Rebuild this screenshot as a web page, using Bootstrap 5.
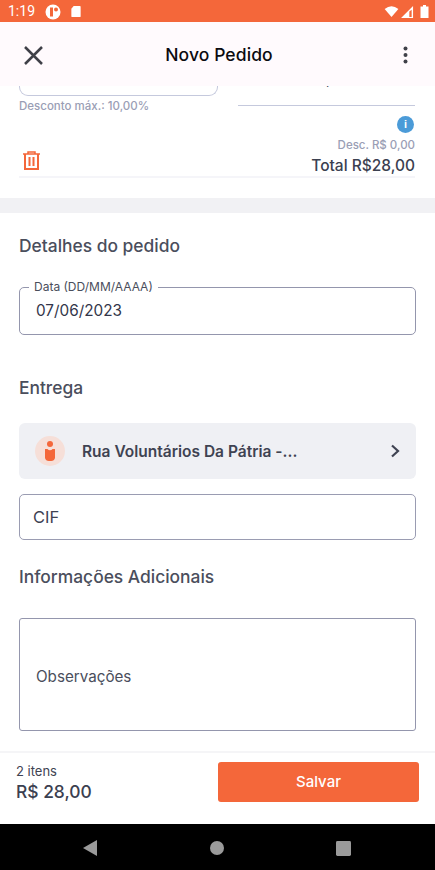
<!DOCTYPE html>
<html lang="pt-BR">
<head>
<meta charset="utf-8">
<title>Novo Pedido</title>
<link href="https://cdn.jsdelivr.net/npm/bootstrap@5.3.0/dist/css/bootstrap.min.css" rel="stylesheet">
<style>
html,body{height:870px;overflow:hidden;background:#fff;}
body{font-family:Inter,"Noto Sans",sans-serif;color:#3b4050;}
.screen{width:435px;height:870px;}
.status-strip{height:22px;background:#f4673a;color:#fff;padding:1px 6px 0 8px;font-family:Roboto,sans-serif;font-size:14px;}
.app-head{height:64px;background:#fffafd;padding:2px 27px 0 23px;flex:none;z-index:2;}
.app-title{font-size:17.5px;font-weight:500;color:#0b0b10;letter-spacing:.1px;margin-right:9px;}
.scroll-zone{height:665px;overflow:hidden;flex:none;}
.clip-row{height:20px;padding:0 20px 0 19px;gap:20px;}
.stub-left{width:199px;height:10px;border:1px solid #c5c9dd;border-top:0;border-radius:0 0 9px 9px;flex:none;}
.stub-right{flex:1;height:20px;border-bottom:1px solid #c5c9dd;position:relative;overflow:hidden;}
.stub-text{margin-top:-15px;font-size:15.5px;line-height:16px;color:#3b4050;padding-left:2px;word-spacing:46px;}
.hint{font-size:11.5px;font-weight:500;color:#9a9eb5;line-height:14px;margin:-7px 0 0 19px;}
.item-foot{margin:0 20px 0 19px;height:65px;border-bottom:2px solid #f5f5f9;position:relative;}
.info-dot{width:17px;height:17px;border-radius:50%;background:#4b9bd8;color:#fff;font:700 11px/17px "Liberation Sans",sans-serif;text-align:center;margin-right:1px;}
.disc{font-size:11.5px;font-weight:500;color:#9a9eb5;line-height:14px;margin-top:5px;}
.total{font-size:15.5px;font-weight:500;color:#3b4050;line-height:20px;margin-top:4px;}
.sep-band{height:15px;background:#f1f1f4;margin-top:20px;}
.sec-title{font-size:17.4px;font-weight:500;color:#4a4e5c;line-height:22px;margin:0 19px;}
.date-box{margin:30px 19px 0;height:48px;border:1px solid #9496ad;border-radius:5px;position:relative;padding:13px 16px 0;font-size:15.3px;line-height:20px;color:#33364a;}
.date-label{position:absolute;left:9px;top:-8px;background:#fff;padding:0 5px;font-size:12px;line-height:14px;color:#4a4e5c;}
.addr-box{margin:24px 19px 0;height:56px;background:#eff0f4;border-radius:6px;padding:0 16px;}
.addr-icon{width:30px;height:30px;border-radius:50%;background:#f6dfd8;flex:none;}
.addr-text{font-size:15.5px;font-weight:600;color:#3f4352;margin:1px 0 0 17px;}
.cif-box{margin:15px 19px 0;height:46px;border:1px solid #9a9cb2;border-radius:5px;padding:0 13px;font-size:16.5px;color:#3f4352;}
.obs-box{margin:30px 19px 0;height:113px;border:1px solid #9496ad;border-radius:3px;padding:6px 16px 0;font-size:15.2px;color:#4a4e5c;}
.foot-bar{height:73px;flex:none;border-top:2px solid #f5f5f7;padding:9px 16px 0;}
.foot-small{font-size:13px;line-height:16px;color:#3f4352;margin-top:1px;}
.foot-price{font-size:17.4px;font-weight:500;line-height:22px;color:#3b4050;margin-top:2px;}
.save-btn{width:201px;height:40px;background:#f4673a;color:#fff;border:0;border-radius:3px;font-size:15px;font-weight:500;padding:0;}
.nav-strip{height:46px;background:#000;flex:none;padding-top:2px;}
.ic-card{margin-left:9px;}
.ic-cam{margin-left:10px;}
.ic-signal{margin-left:2px;}
.ic-batt{margin-left:6px;}
.ic-trash{margin:0 0 6px 4px;}
.nav-a{margin-left:83px;}
.nav-b{margin-left:113px;}
.nav-c{margin-left:112px;}
.head-mt{margin-top:22px;}
.entrega-mt{margin-top:42px;}
.info-mt{margin-top:26px;}
</style>
</head>
<body>
<div class="screen d-flex flex-column">
  <div class="status-strip d-flex align-items-center">
    <span>1:19</span>
    <svg class="ic-cam" width="16" height="16" viewBox="0 0 16 16"><circle cx="8" cy="8" r="7.5" fill="#fff"/><rect x="5" y="3.5" width="3" height="9" fill="#f4673a"/><circle cx="11" cy="5.500" r="2" fill="#f4673a"/></svg>
    <svg class="ic-card" width="12" height="13" viewBox="0 0 12 14"><path d="M3.500 1H10a1 1 0 0 1 1 1v10a1 1 0 0 1-1 1H2a1 1 0 0 1-1-1V4z" fill="#fff"/></svg>
    <svg class="ms-auto" width="15" height="11" viewBox="0 0 15 12"><path d="M0 3.200Q7.500-2.500 15 3.200L7.500 12z" fill="#fff"/></svg>
    <svg class="ic-signal" width="13" height="12" viewBox="0 0 14 13"><path d="M13 0v13H0z" fill="#fff"/><path d="M11.500 4v7.800H9V6z" fill="#f4673a"/></svg>
    <svg class="ic-batt" width="9" height="13" viewBox="0 0 8 13"><path d="M2.500 0h3v1.500H8V13H0V1.500h2.500z" fill="#fff"/></svg>
  </div>
  <div class="app-head d-flex align-items-center justify-content-between position-relative">
    <svg width="21" height="21" viewBox="0 0 21 21"><path d="M2 2l17 17M19 2L2 19" stroke="#3f4048" stroke-width="2.500" fill="none"/></svg>
    <span class="app-title">Novo Pedido</span>
    <svg width="5" height="18" viewBox="0 0 5 18"><circle cx="2.500" cy="2.500" r="2" fill="#3f4048"/><circle cx="2.500" cy="9" r="2" fill="#3f4048"/><circle cx="2.500" cy="15.500" r="2" fill="#3f4048"/></svg>
  </div>
  <div class="scroll-zone">
    <div class="clip-row d-flex">
      <div class="stub-left"></div>
      <div class="stub-right"><div class="stub-text">R$ 14,00</div></div>
    </div>
    <div class="hint">Desconto máx.: 10,00%</div>
    <div class="item-foot d-flex justify-content-between align-items-end">
      <svg class="ic-trash" width="17" height="19" viewBox="0 0 17 19"><path d="M0 3h17M5 3V1h7v2" stroke="#f4673a" stroke-width="1.500" fill="none"/><path d="M2 3v15h13V3M6.500 6v9M10.500 6v9" stroke="#f4673a" stroke-width="2" fill="none"/></svg>
      <div class="text-end d-flex flex-column align-items-end">
        <div class="info-dot">i</div>
        <div class="disc">Desc. R$ 0,00</div>
        <div class="total">Total R$28,00</div>
      </div>
    </div>
    <div class="sep-band"></div>
    <div class="sec-title head-mt">Detalhes do pedido</div>
    <div class="date-box"><span class="date-label">Data (DD/MM/AAAA)</span>07/06/2023</div>
    <div class="sec-title entrega-mt">Entrega</div>
    <div class="addr-box d-flex align-items-center">
      <div class="addr-icon d-flex align-items-center justify-content-center">
        <svg width="14" height="22" viewBox="0 0 14 22"><circle cx="7" cy="4" r="3" fill="#f4673a"/><path d="M2 9h2.500a3 3 0 0 0 5 0H12v9a4 4 0 0 1-4 3H6a4 4 0 0 1-4-3z" fill="#f4673a"/></svg>
      </div>
      <span class="addr-text">Rua Voluntários Da Pátria -...</span>
      <svg class="ms-auto" width="10" height="14" viewBox="0 0 10 14"><path d="M2 1.500L8 7l-6 5.500" stroke="#3f4352" stroke-width="2.200" fill="none"/></svg>
    </div>
    <div class="cif-box d-flex align-items-center">CIF</div>
    <div class="sec-title info-mt">Informações Adicionais</div>
    <div class="obs-box d-flex align-items-center">Observações</div>
  </div>
  <div class="foot-bar d-flex align-items-start justify-content-between">
    <div><div class="foot-small">2 itens</div><div class="foot-price">R$ 28,00</div></div>
    <button class="btn save-btn" type="button">Salvar</button>
  </div>
  <div class="nav-strip d-flex align-items-center position-relative">
    <svg class="nav-a" width="14" height="16" viewBox="0 0 14 16"><path d="M14 0v16L0 8z" fill="#9a9a9a"/></svg>
    <svg class="nav-b" width="14" height="14" viewBox="0 0 14 14"><circle cx="7" cy="7" r="7" fill="#9a9a9a"/></svg>
    <svg class="nav-c" width="15" height="15" viewBox="0 0 16 16"><rect width="16" height="16" rx="1.500" fill="#9a9a9a"/></svg>
  </div>
</div>
<script src="https://cdn.jsdelivr.net/npm/bootstrap@5.3.0/dist/js/bootstrap.bundle.min.js"></script>
</body>
</html>
